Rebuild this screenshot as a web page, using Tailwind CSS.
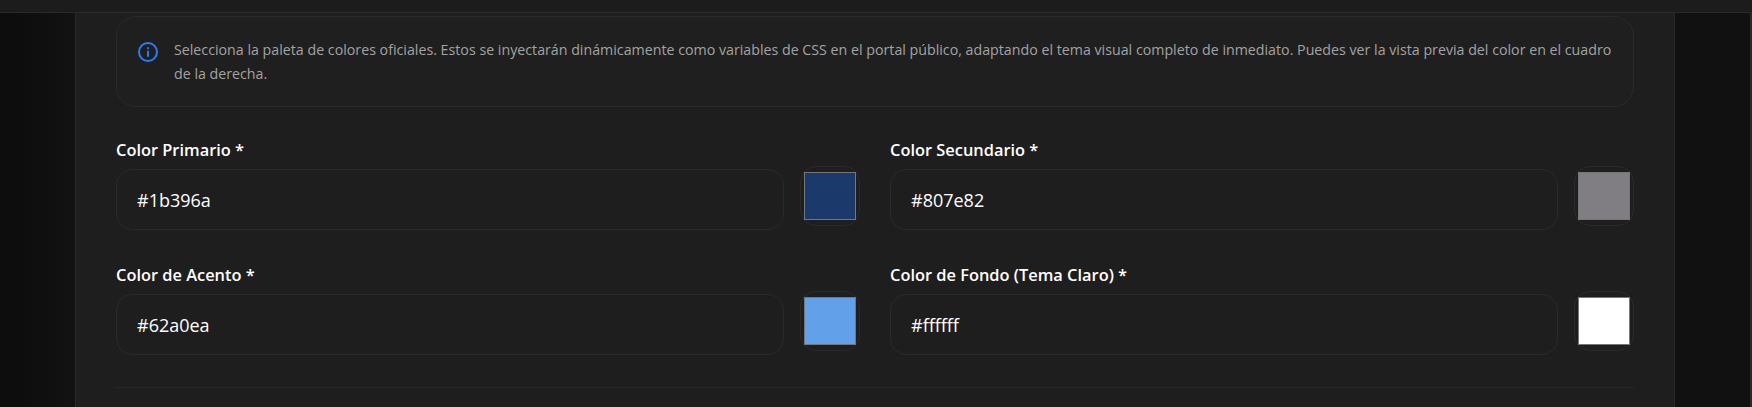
<!DOCTYPE html>
<html lang="es">
<head>
    <meta charset="UTF-8">
    <title>Paleta de colores</title>
    <script src="https://cdn.jsdelivr.net/npm/@tailwindcss/browser@4"></script>
</head>
<body class="bg-[#111111] h-[407px] overflow-hidden font-['Open_Sans','Noto_Sans',sans-serif]">
    <!-- top bar -->
    <div class="h-[13px] bg-[#1c1c1c] border-b border-[#2a2a2a]"></div>

    <div class="flex h-[394px]">
        <div class="w-[75px] shrink-0 bg-gradient-to-r from-[#0c0c0c] to-[#121212]"></div>

        <!-- card -->
        <div class="w-[1600px] shrink-0 bg-[#1e1e1e] border-x border-[#2a2a2a] pt-[3px] px-[40px]">
            <div class="flex gap-4 h-[91px] pl-[21px] pr-[15px] pt-[21px] border border-[#2a2a2a] rounded-[20px] bg-[#1f1f1f]">
                <svg class="w-5 h-5 mt-[4px] shrink-0 text-[#2b7cf5]" viewBox="0 0 20 20" fill="none" stroke="currentColor" stroke-width="2" stroke-linecap="round">
                    <circle cx="10" cy="10" r="9"/>
                    <path d="M10 9.5v4.5"/>
                    <path d="M10 6v.2"/>
                </svg>
                <p class="text-[14.22px] leading-6 text-[#a3a3a3]">Selecciona la paleta de colores oficiales. Estos se inyectarán dinámicamente como variables de CSS en el portal público, adaptando el tema visual completo de inmediato. Puedes ver la vista previa del color en el cuadro de la derecha.</p>
            </div>

            <div class="grid grid-cols-2 gap-x-[30px] mt-[30px]">
                <div>
                    <label class="block h-[29px] pt-px text-[16.4px] leading-6 font-semibold text-white">Color Primario *</label>
                    <div class="flex gap-4 h-[96px] items-start">
                        <input type="text" value="#1b396a" class="flex-1 min-w-0 h-[61px] mt-[3px] pl-5 pr-5 pt-px border border-[#2a2a2a] rounded-[16px] bg-[#1e1e1e] text-lg text-white">
                        <div class="w-[60px] h-[60px] shrink-0 flex items-center justify-center border border-[#2a2a2a] rounded-[16px]">
                            <div class="w-[52px] h-[48px] bg-[#1b396a] border border-[#767676]"></div>
                        </div>
                    </div>
                </div>
                <div>
                    <label class="block h-[29px] pt-px text-[16.4px] leading-6 font-semibold text-white">Color Secundario *</label>
                    <div class="flex gap-4 h-[96px] items-start">
                        <input type="text" value="#807e82" class="flex-1 min-w-0 h-[61px] mt-[3px] pl-5 pr-5 pt-px border border-[#2a2a2a] rounded-[16px] bg-[#1e1e1e] text-lg text-white">
                        <div class="w-[60px] h-[60px] shrink-0 flex items-center justify-center border border-[#2a2a2a] rounded-[16px]">
                            <div class="w-[52px] h-[48px] bg-[#807e82] border border-[#767676]"></div>
                        </div>
                    </div>
                </div>
                <div>
                    <label class="block h-[29px] pt-px text-[16.4px] leading-6 font-semibold text-white">Color de Acento *</label>
                    <div class="flex gap-4 h-[96px] items-start">
                        <input type="text" value="#62a0ea" class="flex-1 min-w-0 h-[61px] mt-[3px] pl-5 pr-5 pt-px border border-[#2a2a2a] rounded-[16px] bg-[#1e1e1e] text-lg text-white">
                        <div class="w-[60px] h-[60px] shrink-0 flex items-center justify-center border border-[#2a2a2a] rounded-[16px]">
                            <div class="w-[52px] h-[48px] bg-[#62a0ea] border border-[#767676]"></div>
                        </div>
                    </div>
                </div>
                <div>
                    <label class="block h-[29px] pt-px text-[16.4px] leading-6 font-semibold text-white">Color de Fondo (Tema Claro) *</label>
                    <div class="flex gap-4 h-[96px] items-start">
                        <input type="text" value="#ffffff" class="flex-1 min-w-0 h-[61px] mt-[3px] pl-5 pr-5 pt-px border border-[#2a2a2a] rounded-[16px] bg-[#1e1e1e] text-lg text-white">
                        <div class="w-[60px] h-[60px] shrink-0 flex items-center justify-center border border-[#2a2a2a] rounded-[16px]">
                            <div class="w-[52px] h-[48px] bg-white border border-[#767676]"></div>
                        </div>
                    </div>
                </div>
            </div>
            <div class="border-t border-[#272727]"></div>
        </div>

        <div class="flex-1 bg-[#111111] border-r-2 border-[#2a2a2a]"></div>
    </div>
</body>
</html>
